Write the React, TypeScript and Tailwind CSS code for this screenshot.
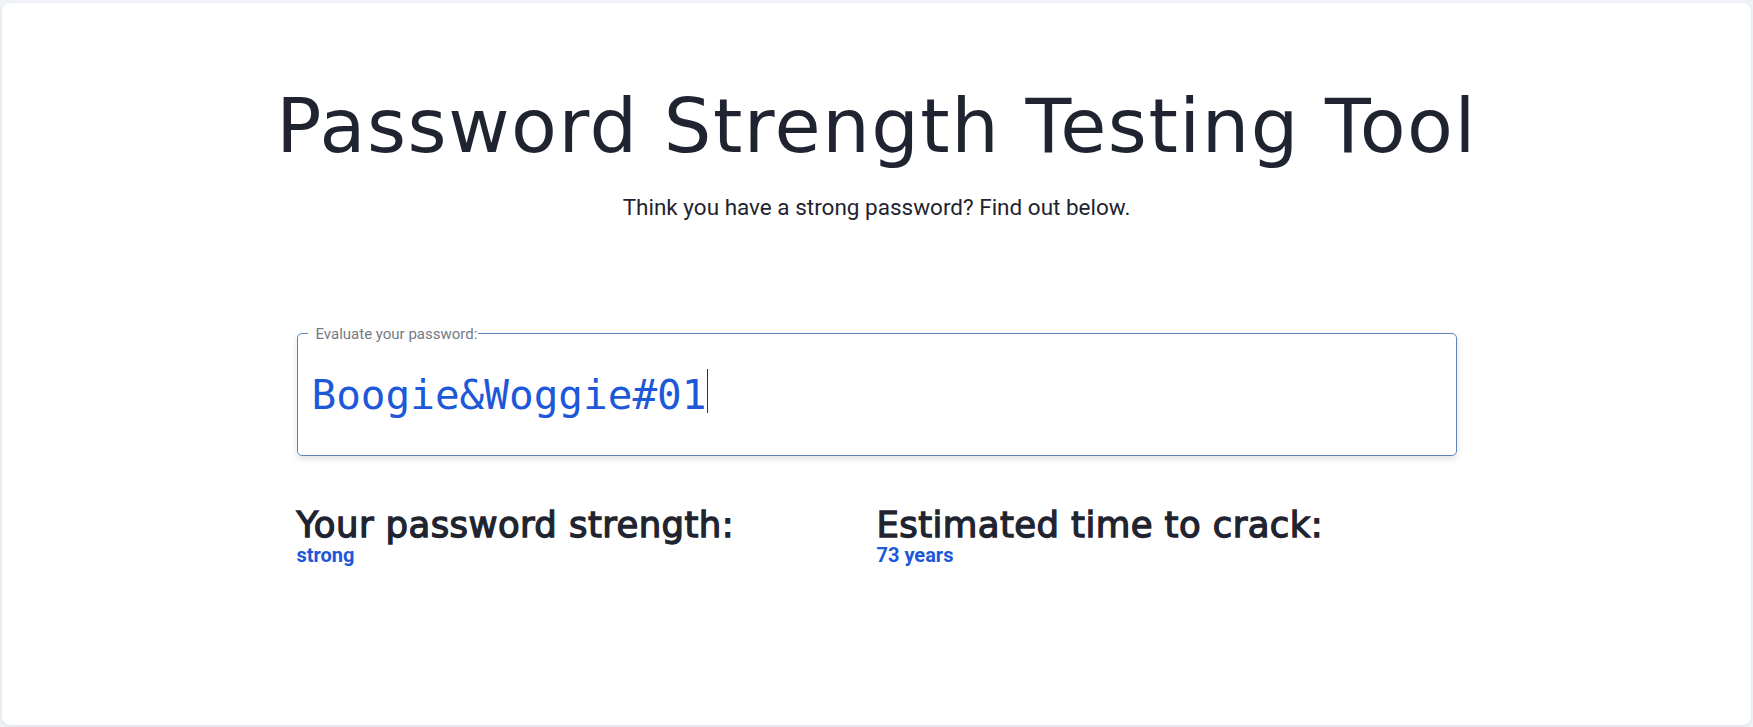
import React from "react";

const password = "Boogie&Woggie#01";

type ResultProps = {
  label: string;
  value: string;
};

function Result({ label, value }: ResultProps) {
  return (
    <div className="min-w-0">
      <h2 className="font-['DejaVu_Sans',sans-serif] text-[35.5px] font-normal leading-[1.02] tracking-[0.4px] text-[#1f2430] [-webkit-text-stroke:1.3px_#1f2430]">
        {label}
      </h2>
      <p className="font-['Roboto',sans-serif] text-[20px] font-bold leading-[1.2] text-[#1c58d8]">{value}</p>
    </div>
  );
}

export default function App() {
  return (
    <div className="h-[727px] overflow-hidden bg-[#eef2f6] px-[2px] pb-[2px] pt-[3px]">
      <div className="h-full rounded-lg bg-white pt-[86px] shadow-[0_1px_3px_rgba(15,23,42,0.08)]">
        <header className="text-center">
          <h1 className="whitespace-nowrap font-['DejaVu_Sans',sans-serif] text-[75px] font-normal leading-none tracking-[1.5px] text-[#1f2430]">
            Password Strength Testing Tool
          </h1>
          <p className="mt-[27px] font-['Roboto',sans-serif] text-[22.5px] leading-[1.5] text-[#1f2430]">
            Think you have a strong password? Find out below.
          </p>
        </header>

        <div className="mx-auto w-[1160px]">
          <fieldset className="mt-[99px] rounded-[5px] border border-[#5f82bd] px-[10px] shadow-[0_3px_6px_rgba(15,23,42,0.12)]">
            <legend className="pl-2 pr-px font-['Roboto',sans-serif] text-[15px] leading-[20px] text-[#747b87]">
              Evaluate your password:
            </legend>
            <div className="flex h-[111px] items-start pl-1 pt-[31px]">
              <span className="font-['DejaVu_Sans_Mono',monospace] text-[41px] leading-none text-[#1c58d8]">
                {password}
              </span>
              <span className="ml-px h-[44px] w-px -translate-y-1.5 bg-[#2b3445]" aria-hidden />
            </div>
          </fieldset>

          <div className="mt-[51px] grid grid-cols-2">
            <Result label="Your password strength:" value="strong" />
            <Result label="Estimated time to crack:" value="73 years" />
          </div>
        </div>
      </div>
    </div>
  );
}
